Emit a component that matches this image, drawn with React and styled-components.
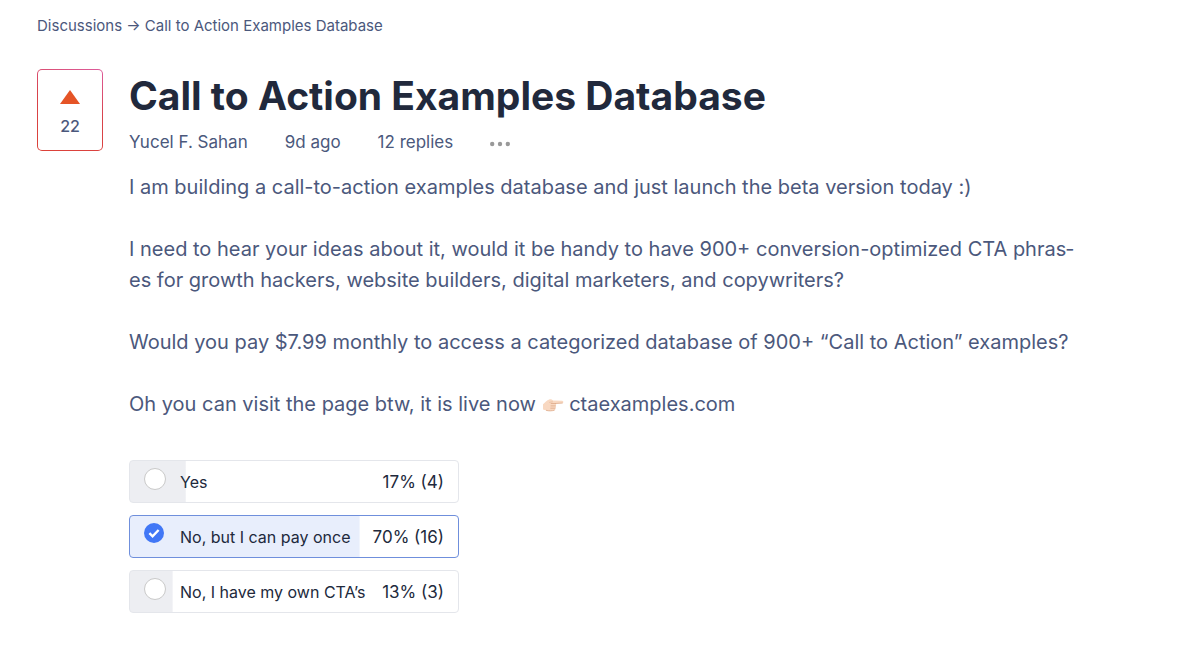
import React, { useState } from "react";
import styled, { createGlobalStyle } from "styled-components";

const GlobalStyle = createGlobalStyle`
  * {
    box-sizing: border-box;
  }
  body {
    margin: 0;
    background-color: #fff;
    font-family: Inter, "Liberation Sans", sans-serif;
    color: #4b587c;
  }
`;

const Page = styled.main`
  padding: 16px 37px 38px;
`;

const Breadcrumb = styled.nav`
  font-size: 15px;
  line-height: 20px;
`;

const PlainLink = styled.a`
  color: inherit;
  text-decoration: none;
`;

const Discussion = styled.article`
  display: flex;
  align-items: flex-start;
  gap: 26px;
  margin-top: 33px;
`;

const VoteButton = styled.button`
  display: flex;
  flex-direction: column;
  align-items: center;
  gap: 12px;
  flex-shrink: 0;
  width: 66px;
  height: 82px;
  padding: 20px 0 0;
  border: 1px solid transparent;
  border-radius: 5px;
  background: linear-gradient(#fff, #fff) padding-box,
    linear-gradient(20deg, #dc4238, #d8434c 55%, #dd5c9c) border-box;
  color: #4b587c;
  font-family: inherit;
  font-size: 16px;
  font-weight: 500;
  line-height: 20px;
  cursor: pointer;
`;

const Content = styled.div`
  flex: 1;
  min-width: 0;
`;

const Title = styled.h1`
  margin: 0;
  font-size: 39px;
  font-weight: 700;
  line-height: 54px;
  color: #21293c;
`;

const Meta = styled.div`
  display: flex;
  align-items: center;
  gap: 37px;
  margin-top: 7px;
  font-size: 17px;
  line-height: 24px;
`;

const MoreButton = styled.button`
  display: flex;
  padding: 4px 0 0;
  border: none;
  background: none;
  color: #999;
  cursor: pointer;
`;

const Body = styled.div`
  display: flex;
  flex-direction: column;
  gap: 31px;
  max-width: 950px;
  margin-top: 18px;
  font-size: 20px;
  line-height: 31px;
`;

const Paragraph = styled.p`
  margin: 0;
`;

const Hand = styled.svg`
  width: 22px;
  height: 16px;
  vertical-align: -2px;
`;

const Poll = styled.fieldset`
  display: flex;
  flex-direction: column;
  gap: 12px;
  max-width: 330px;
  min-width: 0;
  margin: 40px 0 0;
  padding: 0;
  border: none;
`;

const Option = styled.label`
  display: flex;
  align-items: center;
  height: 43px;
  padding: 0 14px;
  border: 1px solid ${(p) => (p.$checked ? "#6f8fdc" : "#e4e6eb")};
  border-radius: 4px;
  background: linear-gradient(
      ${(p) => (p.$checked ? "#e8eefc, #e8eefc" : "#edeef2, #edeef2")}
    )
    0 0 / ${(p) => p.$percent}% 100% no-repeat;
  color: #21293c;
  font-size: 16px;
  line-height: 20px;
  cursor: pointer;
`;

const Radio = styled.input`
  appearance: none;
  flex-shrink: 0;
  width: 22px;
  height: 22px;
  margin: 0 14px 5px 0;
  border: 1px solid #c9c9c9;
  border-radius: 50%;
  background-color: #fff;
  cursor: pointer;

  &:checked {
    width: 20px;
    height: 20px;
    margin-right: 16px;
    margin-bottom: 8px;
    border: none;
    background: #4177f6
      url("data:image/svg+xml,%3Csvg xmlns='http://www.w3.org/2000/svg' viewBox='0 0 20 20' fill='none' stroke='white' stroke-width='2.4'%3E%3Cpath d='M5.4 10.2l3.2 3.2 6-6.4'/%3E%3C/svg%3E")
      center / 20px no-repeat;
  }
`;

const OptionText = styled.span`
  flex: 1;
  white-space: nowrap;
`;

const OptionResult = styled.span`
  font-size: 17px;
  white-space: nowrap;
`;

const options = [
  { label: "Yes", percent: 17, votes: 4 },
  { label: "No, but I can pay once", percent: 70, votes: 16 },
  { label: "No, I have my own CTA’s", percent: 13, votes: 3 },
];

const PointingHand = () => (
  <Hand viewBox="0 0 22 16" role="img" aria-label="pointing right">
    <path
      d="M1 7.2C2.8 5.6 5 3 7.2 2.4c1.2-.4 3 .1 3.9 1l9.1.3c1.5.1 1.6 2.3.1 2.4l-6.8.4c1 .7.9 1.9 0 2.4.8.7.6 1.9-.3 2.3.5.9.1 1.8-1 2.1-2.1.6-5.6.9-7.8.1L1 12.4z"
      fill="#f8d8c1"
    />
    <path
      d="M9.2 6.5h4.2M9 8.9h4.4M8.8 11.2h4.3M4.4 13.4c2.2.8 5.7.5 7.8-.1M13.5 6.5l6.8-.4"
      fill="none"
      stroke="#dda989"
      strokeWidth=".8"
      strokeLinecap="round"
    />
    <path
      d="M7.2 5.4c1.2 0 2.2-.7 3.7-.6"
      fill="none"
      stroke="#e5b799"
      strokeWidth=".7"
    />
  </Hand>
);

const App = () => {
  const [selected, setSelected] = useState(1);

  return (
    <Page>
      <GlobalStyle />
      <Breadcrumb aria-label="Breadcrumb">
        <PlainLink href="#discussions">Discussions</PlainLink> →{" "}
        <PlainLink href="#discussion">Call to Action Examples Database</PlainLink>
      </Breadcrumb>
      <Discussion>
        <VoteButton aria-label="Upvote, 22 votes">
          <svg width="20" height="14" viewBox="0 0 20 14">
            <path d="M10 0l10 14H0z" fill="#e55426" />
          </svg>
          22
        </VoteButton>
        <Content>
          <Title>Call to Action Examples Database</Title>
          <Meta>
            <PlainLink href="#author">Yucel F. Sahan</PlainLink>
            <span>9d ago</span>
            <span>12 replies</span>
            <MoreButton aria-label="More">
              <svg width="20" height="6" viewBox="0 0 20 6" fill="currentColor">
                <circle cx="2.2" cy="3" r="2.2" />
                <circle cx="10" cy="3" r="2.2" />
                <circle cx="17.8" cy="3" r="2.2" />
              </svg>
            </MoreButton>
          </Meta>
          <Body>
            <Paragraph>
              I am building a call-to-action examples database and just launch
              the beta version today :)
            </Paragraph>
            <Paragraph>
              I need to hear your ideas about it, would it be handy to have 900+
              conversion-optimized CTA phras&shy;es for growth hackers, website
              builders, digital marketers, and copywriters?
            </Paragraph>
            <Paragraph>
              Would you pay $7.99 monthly to access a categorized database of
              900+ “Call to Action” examples?
            </Paragraph>
            <Paragraph>
              Oh you can visit the page btw, it is live now <PointingHand />{" "}
              <PlainLink href="#ctaexamples">ctaexamples.com</PlainLink>
            </Paragraph>
          </Body>
          <Poll aria-label="Poll">
            {options.map((option, i) => (
              <Option
                key={option.label}
                $checked={selected === i}
                $percent={option.percent}
              >
                <Radio
                  type="radio"
                  name="poll"
                  checked={selected === i}
                  onChange={() => setSelected(i)}
                />
                <OptionText>{option.label}</OptionText>
                <OptionResult>
                  {option.percent}% ({option.votes})
                </OptionResult>
              </Option>
            ))}
          </Poll>
        </Content>
      </Discussion>
    </Page>
  );
};

export default App;
